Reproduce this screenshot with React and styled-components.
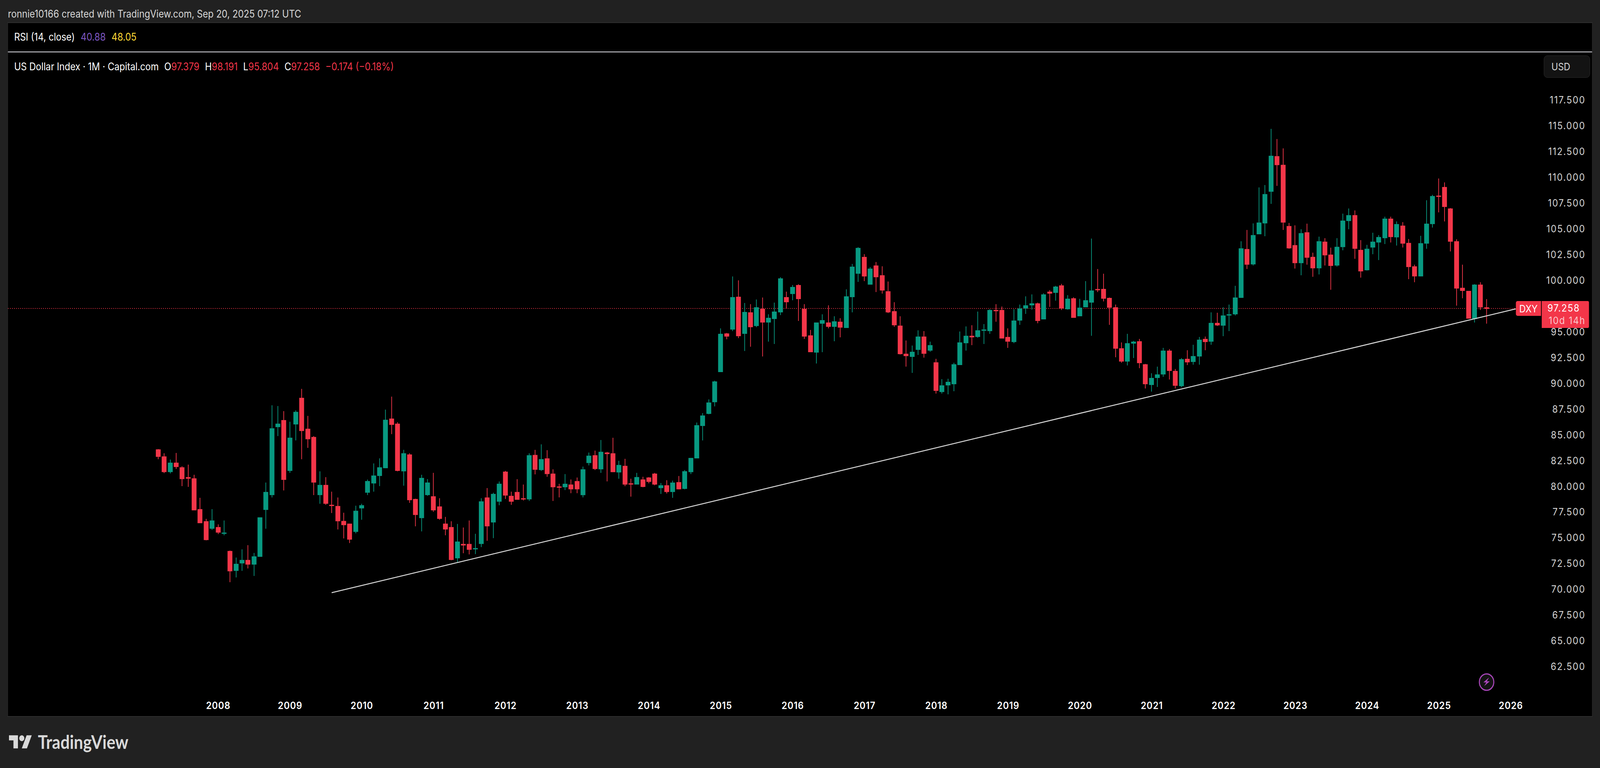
import React from "react";
import styled, { createGlobalStyle } from "styled-components";

const GlobalStyle = createGlobalStyle`
  html, body { margin: 0; padding: 0; background: #212121; overflow: hidden; }
  body { font-family: Inter, "Liberation Sans", sans-serif; }
`;

const RED = "#f33649";
const GREEN = "#089981";
const DESIGN_WIDTH = 4641;

const r = "r";
const g = "g";
const segments = [
  { y0: 950, vs: 2.613, rows: [
    [r,523,525,575,591],[r,551,572,677,684],[g,593,614,677,686],[r,549,614,643,656],[r,638,645,724,771],
    [r,627,711,721,776],[r,695,719,933,933],[r,849,925,1019,1019],[r,990,1006,1132,1134],[g,925,1001,1056,1064],
    [r,1027,1045,1082,1092],[g,1001,1082,1090,1100],[r,1202,1205,1341,1414],[g,1249,1291,1338,1382],[g,1194,1265,1288,1338],
    [r,1166,1265,1296,1322],[g,1218,1241,1296,1372],[g,980,980,1244,1244],[g,747,810,930,1056],[g,230,384,831,847],
    [g,235,353,376,436],[r,269,329,729,800],[g,340,447,669,682],[g,264,274,358,465],[r,120,180,402,591],
    [r,301,387,457,515],[r,436,442,747,831],[g,672,763,831,889],[r,711,763,889,896],[r,808,896,902,951],
    [r,847,904,1006,1061],[r,949,1004,1032,1121],[r,1022,1022,1129,1152],[g,902,936,1077,1087],[g,889,899,920,996],
    [g,727,737,815,831],[g,619,700,753,808],[g,585,645,703,771],[g,259,327,651,651],[r,172,319,361,423],
    [r,343,353,669,672],[g,528,551,672,768],[r,551,559,865,883],[r,855,857,964,1040],[g,695,716,985,1074],
    [g,724,747,831,836],[r,682,839,933,943],[r,852,907,990,996],[r,977,1022,1061,1100],[r,1006,1045,1265,1267],
    [g,1024,1142,1254,1280],[r,1048,1158,1168,1220],[r,1001,1158,1197,1228],[g,1090,1186,1192,1226],[g,852,873,1158,1179],
    [r,784,847,1040,1137],[g,815,823,1014,1119],[g,740,755,875,899],[r,669,674,834,857],[r,808,836,875,896],
  ]},
  { y0: 900, vs: 2.613, rows: [
    [r,855,941,993,993],[r,891,983,988,998],[g,682,695,990,1001],[r,659,693,792,823],[g,622,721,794,800],
    [r,661,716,821,839],[r,789,818,909,1001],[r,886,904,912,977],[g,821,886,909,928],[r,857,891,923,949],
    [r,844,868,923,949],[g,771,789,962,977],[g,677,698,747,763],[r,664,695,787,794],[g,593,672,789,813],
    [r,672,677,687,870],[r,578,682,808,808],[g,732,760,810,852],[r,719,766,891,902],[r,852,883,889,972],
    [g,813,841,891,891],[r,839,857,907,909],[r,841,844,873,883],[r,813,818,891,896],[g,881,896,915,954],
    [r,862,896,941,951],[g,865,878,941,980],[r,834,875,923,923],[g,794,802,920,923],[g,713,713,808,821],
    [g,476,494,716,716],[g,413,429,499,596],[g,321,342,418,421],[g,196,201,340,368],
  ]},
  { y0: 580, vs: 3, rows: [
    [g,783,825,1119,1119],[r,818,822,846,867],[g,384,543,792,804],[r,414,540,843,858],[g,588,657,825,957],
    [r,597,660,774,924],[g,561,621,765,774],[r,546,633,738,999],[g,675,702,738,885],[g,585,654,711,903],
    [g,390,399,660,681],[r,501,543,582,630],[g,450,465,519,567],[r,444,450,558,726],[r,597,633,846,864],
    [r,795,837,966,966],[g,738,738,969,1053],[g,675,720,747,966],[r,606,738,771,783],[g,690,729,771,882],
    [r,705,732,777,852],[g,483,537,780,780],[g,288,309,543,660],[g,159,165,363,426],[r,213,234,384,420],
    [g,312,324,447,447],[r,273,300,390,504],[r,306,375,492,516],[r,423,498,660,666],[r,582,651,759,771],
    [r,690,762,981,984],[r,876,978,996,1077],[g,915,963,1002,1125],[g,798,846,948,987],[r,804,846,978,1008],
    [g,885,912,954,963],[r,1017,1044,1263,1284],[g,1173,1221,1272,1284],[g,1170,1194,1221,1290],[g,1047,1059,1212,1266],
    [g,807,891,1065,1065],[g,768,840,897,954],[r,759,840,852,912],[g,654,798,849,855],[g,750,792,798,903],
    [g,636,642,804,825],[r,597,642,648,732],[r,615,642,861,861],[r,783,849,885,933],[g,636,723,888,897],
    [g,600,630,723,756],[g,537,606,630,672],[g,522,591,606,639],[r,585,591,726,744],[g,513,522,714,714],
    [r,489,501,516,618],[g,456,462,510,570],[r,441,453,630,642],[g,528,555,636,639],
    [r,544,552,702,702],[g,556,624,690,690],[g,420,567,621,621],[g,93,492,585,840],[r,327,481,486,504],
    [r,363,480,555,576],[r,546,549,624,756],[r,600,621,939,1005],[r,891,936,1038,1047],[g,825,897,1038,1068],
    [g,879,885,900,1011],[r,864,882,1050,1089],[r,1056,1059,1212,1245],[g,1128,1164,1218,1269],[g,1077,1137,1164,1233],
    [g,933,954,1137,1155],[r,942,954,1110,1176],[r,1095,1110,1224,1245],[g,1011,1020,1227,1236],[r,951,1017,1044,1065],
    [g,909,996,1041,1062],[g,849,870,999,1062],[r,846,864,888,951],[g,660,741,885,909],[r,663,741,760,765],
    [g,621,684,762,843],[g,600,675,681,804],[g,456,546,675,684],
  ]},
  { y0: 300, vs: 2.8, rows: [
    [g,890,941,1296,1296],[r,809,946,1058,1089],[g,762,846,1056,1064],[g,504,756,840,840],[g,487,552,762,854],
    [g,84,277,535,622],[r,157,280,344,493],[r,224,342,756,809],[r,759,781,941,944],[r,776,918,1047,1086],
    [g,804,832,1047,1134],[r,764,826,1008,1058],[r,972,1002,1084,1145],[g,857,890,1084,1128],[r,868,893,991,1064],
    [r,936,986,1067,1238],[g,868,930,1064,1072],[g,692,742,932,955],[g,655,703,745,804],[r,669,703,944,1016],
    [r,882,952,1106,1151],[g,916,944,1098,1100],[g,829,893,935,983],[g,846,860,899,1025],[g,714,728,868,910],
    [r,714,728,860,899],[g,748,767,862,921],[r,753,778,907,935],[r,874,902,1075,1162],[r,1058,1070,1142,1184],
    [g,851,904,1142,1142],[g,596,764,907,944],[g,557,566,767,792],[r,440,563,571,683],[r,468,501,644,748],
    [r,652,655,893,963],[r,876,890,1229,1352],[r,1058,1224,1246,1299],[r,1246,1246,1445,1445],[g,1198,1201,1448,1473],
    [r,1184,1201,1364,1383],[r,1305,1364,1375,1481],
  ]},
];

const candles = segments.flatMap(({ y0, vs, rows }) =>
  rows.map(([c, wt, bt, bb, wb]) => ({
    c,
    wt: y0 + wt / vs,
    bt: y0 + bt / vs,
    bb: y0 + bb / vs,
    wb: y0 + wb / vs,
  }))
);

const prices = [];
for (let p = 117.5; p >= 62.5; p -= 2.5) prices.push(p.toFixed(3));
const years = [];
for (let y = 2008; y <= 2026; y++) years.push(y);

const Page = styled.div`
  width: 4641px;
  height: 1967px;
  background: #212121;
  display: flex;
  flex-direction: column;
  overflow: hidden;
  transform-origin: 0 0;
`;
const Header = styled.header`
  height: 57px;
  flex: none;
  padding: 13px 0 0 23px;
  display: flex;
  align-items: center;
  box-sizing: border-box;
  font-size: 26.4px;
  color: #d6d6d6;
`;
const Frame = styled.main`
  width: 4599px;
  height: 1779px;
  flex: none;
  margin-left: 21px;
  box-sizing: border-box;
  border: 2px solid #2e2e2e;
  background: #000;
  display: flex;
  flex-direction: column;
`;
const RsiPane = styled.section`
  height: 75px;
  flex: none;
  box-sizing: border-box;
  border-bottom: 2px solid #e0e0e8;
  padding-left: 18px;
  padding-bottom: 4px;
  display: flex;
  align-items: center;
  gap: 17px;
  font-size: 26.4px;
  color: #fff;
`;
const Value = styled.span`
  color: ${(p) => p.$color || "#fff"};
`;
const MainPane = styled.section`
  flex: 1;
  min-height: 0;
  position: relative;
  display: grid;
  grid-template-columns: 1fr 146px;
  grid-template-rows: 1fr 60px;
`;
const ChartSvg = styled.svg`
  position: absolute;
  inset: 0;
  width: 100%;
  height: 100%;
`;
const PlotColumn = styled.div`
  position: relative;
`;
const Legend = styled.div`
  height: 72px;
  padding-left: 18px;
  display: flex;
  align-items: center;
  gap: 16px;
  font-size: 26.4px;
  color: #fff;
`;
const AxisColumn = styled.div`
  position: relative;
  padding-top: 8px;
  display: flex;
  flex-direction: column;
  align-items: flex-end;
`;
const CurrencyButton = styled.div`
  width: 134px;
  height: 57px;
  margin-right: 6px;
  margin-bottom: 24px;
  box-sizing: border-box;
  padding-left: 21px;
  display: flex;
  align-items: center;
  border: 1px solid #2e2e2e;
  border-radius: 10px;
  background: #131313;
  font-size: 26px;
  color: #d6d6d6;
`;
const PriceLabel = styled.div`
  height: 65.95px;
  padding-right: 19px;
  display: flex;
  align-items: center;
  font-size: 26px;
  letter-spacing: 2.2px;
  color: #d6d6d6;
`;
const TimeAxis = styled.div`
  grid-column: 1 / -1;
  position: relative;
  padding-left: 506px;
  padding-top: 4px;
  display: flex;
  align-items: center;
`;
const YearLabel = styled.div`
  width: 208.3px;
  flex: none;
  text-align: center;
  font-size: 26px;
  font-weight: 600;
  letter-spacing: 1px;
  color: #fff;
`;
const SymbolTag = styled.div`
  position: absolute;
  left: 4374px;
  top: 637px;
  width: 73px;
  height: 38px;
  display: flex;
  align-items: center;
  justify-content: center;
  border-radius: 5px 0 0 5px;
  background: ${RED};
  color: #fff;
  font-size: 26px;
`;
const PriceTag = styled.div`
  position: absolute;
  left: 4449px;
  top: 637px;
  width: 137px;
  height: 69px;
  box-sizing: border-box;
  padding: 2px 10px 0 0;
  display: flex;
  flex-direction: column;
  align-items: flex-end;
  border-radius: 0 4px 4px 0;
  background: ${RED};
  color: #fff;
  font-size: 26px;
  line-height: 32px;
  letter-spacing: 2px;
`;
const PriceTagValue = styled.span`
  margin-right: 16px;
`;
const Countdown = styled.span`
  color: rgba(255, 255, 255, 0.72);
`;
const Footer = styled.footer`
  flex: 1;
  padding: 47px 0 0 26px;
  display: flex;
  align-items: flex-start;
  gap: 17px;
  color: #d9d9d9;
`;
const Wordmark = styled.span`
  font-family: Lato, Inter, sans-serif;
  font-size: 47.5px;
  font-weight: 700;
  line-height: 34px;
`;

function Chart() {
  return (
    <ChartSvg viewBox="23 134 4595 1700">
      <line x1="23" y1="790" x2="4397" y2="790" stroke={RED} strokeWidth="2" strokeDasharray="2 4" />
      {candles.map((k, i) => {
        const x = Math.round(459 + i * 17.354);
        const fill = k.c === "r" ? RED : GREEN;
        return (
          <g key={i} fill={fill}>
            <rect x={x - 1} y={k.wt} width="2" height={Math.max(k.wb - k.wt, 1)} />
            <rect x={x - 7} y={k.bt} width="14" height={Math.max(k.bb - k.bt, 3)} />
          </g>
        );
      })}
      <line x1="962" y1="1518" x2="4397" y2="791" stroke="#d8d8d8" strokeWidth="2.5" />
      <circle cx="4312" cy="1747" r="21" fill="#131313" stroke="#ab47bc" strokeWidth="3" />
      <path d="M4319.3 1735L4302.7 1747.7H4311.2L4305.3 1757L4321.3 1745H4312.8Z" fill="#ab47bc" />
    </ChartSvg>
  );
}

function LogoMark() {
  return (
    <svg width="67" height="34" viewBox="0 4 36 18" fill="currentColor">
      <path d="M14 22H7V11H0V4h14v18z" />
      <path d="M28 22h-8l7.5-18h8L28 22z" />
      <circle cx="20" cy="8" r="4" />
    </svg>
  );
}

export default function App() {
  // The browser window may be narrower than the design width: fit the page to it.
  const fit = Math.min(1, window.innerWidth / DESIGN_WIDTH);
  return (
    <Page style={{ transform: `scaleX(${fit})` }}>
      <GlobalStyle />
      <Header>ronnie10166 created with TradingView.com, Sep 20, 2025 07:12 UTC</Header>
      <Frame>
        <RsiPane>
          <span>RSI (14, close)</span>
          <Value $color="#7e57c2">40.88</Value>
          <Value $color="#fdd835">48.05</Value>
        </RsiPane>
        <MainPane>
          <Chart />
          <PlotColumn>
            <Legend>
              <span>US Dollar Index · 1M · Capital.com</span>
              <span>O<Value $color={RED}>97.379</Value></span>
              <span>H<Value $color={RED}>98.191</Value></span>
              <span>L<Value $color={RED}>95.804</Value></span>
              <span>C<Value $color={RED}>97.258</Value></span>
              <Value $color={RED}>−0.174 (−0.18%)</Value>
            </Legend>
          </PlotColumn>
          <AxisColumn>
            <CurrencyButton>USD</CurrencyButton>
            {prices.map((p) => (
              <PriceLabel key={p}>{p === "97.500" ? "" : p}</PriceLabel>
            ))}
          </AxisColumn>
          <TimeAxis>
            {years.map((y) => (
              <YearLabel key={y}>{y}</YearLabel>
            ))}
          </TimeAxis>
          <SymbolTag>DXY</SymbolTag>
          <PriceTag>
            <PriceTagValue>97.258</PriceTagValue>
            <Countdown>10d 14h</Countdown>
          </PriceTag>
        </MainPane>
      </Frame>
      <Footer>
        <LogoMark />
        <Wordmark>TradingView</Wordmark>
      </Footer>
    </Page>
  );
}
